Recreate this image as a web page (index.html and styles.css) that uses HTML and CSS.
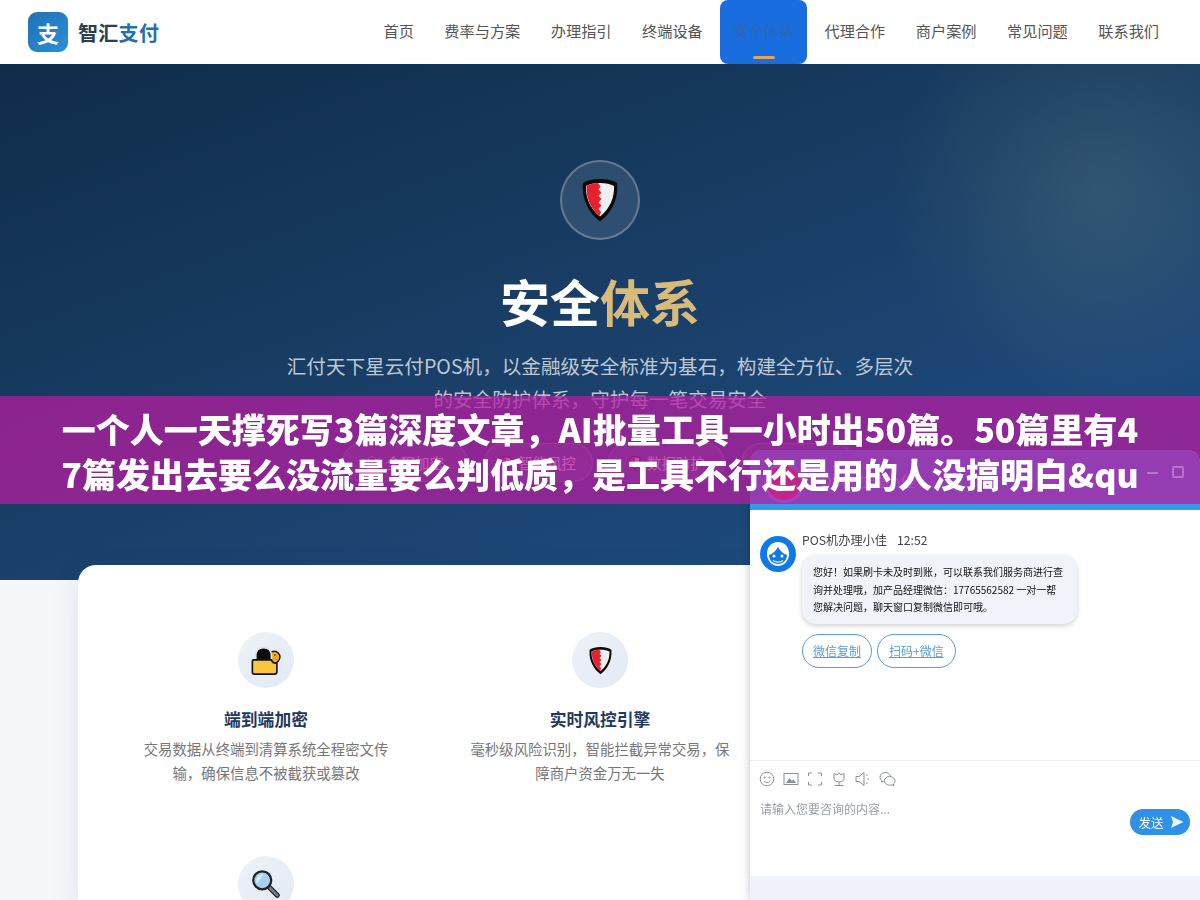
FILE: index.html
```html
<!DOCTYPE html>
<html lang="zh-CN">
<head>
  <meta charset="UTF-8">
  <meta name="viewport" content="width=device-width, initial-scale=1.0">
  <title>安全体系 - 智汇支付</title>
  <link rel="stylesheet" href="styles.css">
</head>
<body>
  <svg class="icon-defs" width="0" height="0" aria-hidden="true">
    <symbol id="shield" viewBox="0 0 36 44">
      <path d="M18 1C25 1 31 2.500 35 5C36.500 19 31 34 18 43.500C5 34 -.5 19 1 5C5 2.500 11 1 18 1Z" fill="#0a0a0a"/>
      <path d="M18 5C24 5 28.500 6 32 8C32.500 19 28.500 30 18 38.500C7.500 30 3.500 19 4 8C7.500 6 12 5 18 5Z" fill="#efefef"/>
      <path d="M16 5C12.500 5.200 8 6 4.500 8C4 19 8 30 17.500 38L19 34L16.500 31L19.500 27.500L16.500 24.500L19.500 21L16.500 18L19.500 14.500L16.500 11.500L18.500 8.500Z" fill="#e8212e"/>
    </symbol>
    <symbol id="lock" viewBox="0 0 44 42">
      <circle cx="34" cy="16" r="8.500" fill="#eda81f" stroke="#111" stroke-width="2"/>
      <circle cx="35" cy="13" r="1.300" fill="#6b4300"/>
      <path d="M7 24V14C7 6 12 2 18.500 2C25 2 30 6 30 14V24Z" fill="#0c0c0c" stroke="#e4e4e4" stroke-width="2.500"/>
      <path d="M4 20H30C31 24 34 25.500 38 25V37C38 39.500 37 41 34 41H5C3 41 2 40 2 38V22C2 21 3 20 4 20Z" fill="#fcc53f" stroke="#111" stroke-width="2.400"/>
    </symbol>
    <symbol id="magnifier" viewBox="0 0 40 40">
      <path d="M23 23L35 35" stroke="#222" stroke-width="7" stroke-linecap="round"/>
      <path d="M24 24L35 35" stroke="#6f7f88" stroke-width="3.500" stroke-linecap="round"/>
      <circle cx="15" cy="15" r="12" fill="#a9d0ef" stroke="#222" stroke-width="3"/>
      <path d="M7 17C7 11 11 7 17 7L8 19Z" fill="#d8ecfa"/>
    </symbol>
  </svg>

  <header class="site-header">
    <a class="logo" href="#">
      <span class="logo-mark">支</span>
      <span class="logo-text">智汇<em>支付</em></span>
    </a>
    <nav class="main-nav">
      <a href="#">首页</a>
      <a href="#">费率与方案</a>
      <a href="#">办理指引</a>
      <a href="#">终端设备</a>
      <a href="#" class="active">安全体系</a>
      <a href="#">代理合作</a>
      <a href="#">商户案例</a>
      <a href="#">常见问题</a>
      <a href="#">联系我们</a>
    </nav>
  </header>

  <section class="hero">
    <div class="hero-icon"><svg width="36" height="44"><use href="#shield"/></svg></div>
    <h1>安全<span>体系</span></h1>
    <p>汇付天下星云付POS机，以金融级安全标准为基石，构建全方位、多层次的安全防护体系，守护每一笔交易安全</p>
    <div class="hero-tags">
      <span class="tag tag-a"><svg width="14" height="14"><use href="#lock"/></svg>全程加密</span>
      <span class="tag tag-b"><svg width="12" height="14"><use href="#shield"/></svg>智能风控</span>
      <span class="tag tag-c"><svg width="12" height="14"><use href="#shield"/></svg>数据防护</span>
      <span class="tag tag-d"><svg width="14" height="14"><use href="#magnifier"/></svg>合规认证</span>
    </div>
  </section>

  <main class="features">
    <div class="feature">
      <div class="feature-icon"><svg width="30" height="29"><use href="#lock"/></svg></div>
      <h3>端到端加密</h3>
      <p>交易数据从终端到清算系统全程密文传输，确保信息不被截获或篡改</p>
    </div>
    <div class="feature">
      <div class="feature-icon"><svg width="23" height="29"><use href="#shield"/></svg></div>
      <h3>实时风控引擎</h3>
      <p>毫秒级风险识别，智能拦截异常交易，保障商户资金万无一失</p>
    </div>
    <div class="feature"></div>
    <div class="feature">
      <div class="feature-icon"><svg width="30" height="30"><use href="#magnifier"/></svg></div>
    </div>
  </main>

  <aside class="chat">
    <div class="chat-head">
      <span class="chat-head-avatar"></span>
      <span class="chat-head-title">POS机办理小佳</span>
    </div>
    <div class="chat-body">
      <svg class="avatar" width="36" height="36" viewBox="0 0 36 36">
        <circle cx="18" cy="18" r="18" fill="#0f7ae5"/>
        <path d="M18 6C11 6 7 11 7 18C7 25 12 30 18 30C24 30 29 25 29 18C29 11 25 6 18 6Z" fill="#fff"/>
        <path d="M9 19C12 18 16 15 18 11C20 15 24 18 27 19C27 24 23 28 18 28C13 28 9 24 9 19Z" fill="#0f7ae5"/>
        <circle cx="14" cy="20" r="1.500" fill="#fff"/>
        <circle cx="22" cy="20" r="1.500" fill="#fff"/>
        <path d="M13 24.500C16 26.500 20 26.500 23 24.500" stroke="#fff" stroke-width="1.200" fill="none"/>
      </svg>
      <div class="msg">
        <div class="msg-meta">POS机办理小佳<span>12:52</span></div>
        <div class="bubble">您好！如果刷卡未及时到账，可以联系我们服务商进行查询并处理哦，加产品经理微信：17765562582 一对一帮您解决问题，聊天窗口复制微信即可哦。</div>
        <div class="msg-actions">
          <a href="#">微信复制</a>
          <a href="#">扫码+微信</a>
        </div>
      </div>
    </div>
    <div class="chat-input">
      <div class="chat-tools">
        <svg width="16" height="16" viewBox="0 0 16 16"><circle cx="8" cy="8" r="6.800"/><circle cx="5.500" cy="6.500" r=".6"/><circle cx="10.500" cy="6.500" r=".6"/><path d="M4.800 10C6.500 12 9.500 12 11.200 10"/></svg>
        <svg width="16" height="16" viewBox="0 0 16 16"><rect x="1" y="2.500" width="14" height="11"/><path class="solid" d="M3 12L6.500 7L9 10L10.500 8.500L13 12Z"/></svg>
        <svg width="16" height="16" viewBox="0 0 16 16"><path d="M1.500 5V2H5M11 2H14.500V5M14.500 11V14H11M5 14H1.500V11"/></svg>
        <svg width="16" height="16" viewBox="0 0 16 16"><path d="M3 2.500L6 4L8 1.500L10 4L13 2.500V7C13 9.500 11 11 8 11C5 11 3 9.500 3 7ZM8 11V14M3.500 14.500H12.500"/></svg>
        <svg width="16" height="16" viewBox="0 0 16 16"><path d="M1 5.500H4L9 1.500V14.500L4 10.500H1ZM12 3.500V5M13 7.500V9M12 11.500V13"/></svg>
        <svg width="17" height="16" viewBox="0 0 17 16"><path d="M11.500 5.500C11 3 9 1.500 6.500 1.500C3.500 1.500 1 3.500 1 6C1 7.500 1.800 8.800 3 9.500L2.500 11.200L4.500 10.200"/><path d="M10.500 5.500C13.500 5.500 16 7.500 16 10C16 11.300 15.400 12.300 14.500 13L15 14.700L13 13.800C10 15 5.500 13.500 5.500 10C5.500 7.500 8 5.500 10.500 5.500Z"/></svg>
      </div>
      <div class="chat-input-row">
        <span class="placeholder">请输入您要咨询的内容...</span>
        <button type="button" class="send">发送
          <svg width="14" height="14" viewBox="0 0 14 14"><path d="M1 1L13.500 7L1 13L3 7Z" fill="#e8f3fd"/></svg>
        </button>
      </div>
    </div>
    <div class="chat-foot"></div>
  </aside>

  <div class="banner">
    <div class="banner-text">一个人一天撑死写3篇深度文章，AI批量工具一小时出50篇。50篇里有47篇发出去要么没流量要么判低质，是工具不行还是用的人没搞明白&amp;qu</div>
    <span class="win-min"></span>
    <span class="win-max"></span>
  </div>
</body>
</html>
```

FILE: styles.css
```css
* {
  box-sizing: border-box;
}
html, body {
  height: 900px;
  overflow: hidden;
}
body {
  margin: 0;
  font-family: "Noto Sans CJK SC", "Noto Sans", sans-serif;
  background-color: #f5f7fa;
  color: #333;
}
a {
  text-decoration: none;
  color: inherit;
}
.icon-defs {
  position: absolute;
}

/* header */
.site-header {
  height: 64px;
  padding: 0 28px;
  display: flex;
  align-items: center;
  justify-content: space-between;
  background: #fff;
}
.logo {
  display: flex;
  align-items: center;
  gap: 10px;
}
.logo-mark {
  width: 40px;
  height: 40px;
  border-radius: 9px;
  background: linear-gradient(135deg, #1f72b4, #2a90d8);
  color: #fff;
  font-size: 22px;
  font-weight: 700;
  line-height: 40px;
  text-align: center;
}
.logo-text {
  font-size: 20px;
  font-weight: 700;
  color: #2c3e50;
  letter-spacing: .3px;
}
.logo-text em {
  font-style: normal;
  color: #1f6fb2;
}
.main-nav {
  height: 64px;
  display: flex;
  gap: 4.5px;
}
.main-nav a {
  position: relative;
  padding: 0 13px;
  font-size: 15.2px;
  line-height: 60px;
  color: #555;
}
.main-nav a.active {
  background: #1a6ddf;
  color: #2a68b8;
  border-radius: 8px;
}
.main-nav a.active::after {
  content: "";
  position: absolute;
  left: 33px;
  bottom: 5px;
  width: 22px;
  height: 3px;
  border-radius: 2px;
  background: #dca566;
}

/* hero */
.hero {
  height: 516px;
  padding-top: 96px;
  text-align: center;
  color: #fff;
  background:
    radial-gradient(circle at 1100px 130px, rgba(125, 150, 130, .24), rgba(125, 150, 130, 0) 210px),
    linear-gradient(160deg, #0f2c49 0%, #1a3f68 50%, #1e5088 100%);
}
.hero-icon {
  width: 80px;
  height: 80px;
  margin: 0 auto;
  border-radius: 50%;
  background: rgba(255, 255, 255, .1);
  border: 2px solid rgba(255, 255, 255, .25);
  display: flex;
  align-items: center;
  justify-content: center;
}
.hero h1 {
  margin: 24px 0 0;
  font-size: 50px;
  line-height: 72px;
  font-weight: 700;
}
.hero h1 span {
  color: #d8bb7a;
}
.hero p {
  width: 640px;
  margin: 13px auto 0;
  font-size: 19.6px;
  line-height: 33px;
  color: rgba(255, 255, 255, .72);
}
.hero-tags {
  width: 512px;
  margin: 28px 0 0 342px;
  display: flex;
  justify-content: space-between;
}
.tag {
  height: 39px;
  display: flex;
  align-items: center;
  justify-content: center;
  gap: 6px;
  font-size: 14.4px;
  border: 1px solid rgba(255, 255, 255, .2);
  border-radius: 20px;
  background: rgba(255, 255, 255, .1);
  color: #fff;
}
.tag-a { width: 126px; }
.tag-b { width: 109px; }
.tag-c { width: 117px; }
.tag-d { width: 113px; }

/* feature card */
.features {
  width: 1044px;
  height: 335px;
  margin: -15px auto 0;
  padding: 35px 38px 0;
  position: relative;
  overflow: hidden;
  display: grid;
  grid-template-columns: repeat(3, 300px);
  grid-auto-rows: 224px;
  gap: 0 34px;
  background: #fff;
  border-radius: 18px 18px 0 0;
  box-shadow: 0 8px 30px rgba(20, 50, 90, .1);
}
.feature {
  padding: 32px 18px 0;
  text-align: center;
}
.feature-icon {
  width: 56px;
  height: 56px;
  margin: 0 auto;
  border-radius: 50%;
  background: linear-gradient(135deg, #eef2f8, #e2eaf5);
  display: flex;
  align-items: center;
  justify-content: center;
}
.feature h3 {
  margin: 19px 0 0;
  font-size: 16.8px;
  line-height: 24px;
  font-weight: 700;
  color: #1e3a5f;
}
.feature p {
  margin: 6px 0 0;
  font-size: 14.4px;
  line-height: 24px;
  color: #777;
}

/* chat window */
.chat {
  position: fixed;
  left: 750px;
  top: 450px;
  width: 450px;
  height: 450px;
  display: flex;
  flex-direction: column;
  background: #fff;
  border-radius: 12px 12px 0 0;
  box-shadow: 0 0 10px rgba(0, 0, 0, .25);
}
.chat-head {
  height: 60px;
  flex: none;
  padding: 16px 17px 0;
  display: flex;
  gap: 10px;
  background: #3a96e8;
  border-radius: 12px 12px 0 0;
  font-size: 15px;
  color: #fff;
}
.chat-head-avatar {
  width: 34px;
  height: 34px;
  border-radius: 50%;
  background: #e23a63;
  box-shadow: 0 0 0 3px rgba(255, 255, 255, .3);
}
.chat-head-title {
  line-height: 30px;
  opacity: .6;
}
.chat-body {
  height: 250px;
  flex: none;
  padding: 26px 10px 0;
  display: flex;
  gap: 6px;
}
.avatar {
  flex: none;
}
.msg-meta {
  font-size: 12.2px;
  line-height: 16px;
  margin-top: -4px;
  color: #444;
}
.msg-meta span {
  margin-left: 10px;
}
.bubble {
  width: 275px;
  margin-top: 7px;
  padding: 8px 11px;
  border-radius: 14px;
  background: #f1f3fa;
  box-shadow: 0 2px 5px rgba(0, 0, 0, .18);
  font-size: 10px;
  line-height: 17.500px;
  color: #111;
}
.msg-actions {
  margin-top: 10px;
  display: flex;
  gap: 5px;
}
.msg-actions a {
  height: 34px;
  padding: 0 10px;
  border: 1px solid #5b9ccb;
  border-radius: 17px;
  font-size: 12px;
  line-height: 32px;
  color: #5a9bd8;
  text-decoration: underline;
}
.msg-actions a:last-child {
  padding: 0 11px;
}
.chat-input {
  flex: 1;
  padding: 10px 9px 0;
  border-top: 1px solid #eceef2;
}
.chat-tools {
  display: flex;
  gap: 8px;
}
.chat-tools svg {
  fill: none;
  stroke: #8a8f99;
  stroke-width: 1;
}
.chat-tools .solid {
  fill: #8a8f99;
  stroke: none;
}
.chat-input-row {
  display: flex;
  justify-content: space-between;
  align-items: flex-start;
  padding: 0 1px;
}
.placeholder {
  margin-top: 13px;
  font-size: 12px;
  line-height: 18px;
  color: #9aa0a8;
}
.send {
  width: 60px;
  height: 26px;
  margin-top: 22px;
  padding: 0 0 0 2px;
  display: flex;
  align-items: center;
  justify-content: center;
  gap: 6px;
  border: none;
  border-radius: 13px;
  background: #2f90e8;
  color: #fff;
  font-family: inherit;
  font-size: 12.5px;
}
.chat-foot {
  height: 24px;
  flex: none;
  background: #f0f2fa;
}

/* purple banner */
.banner {
  position: fixed;
  left: 0;
  top: 396px;
  width: 1200px;
  height: 108px;
  padding: 10px 60px 0;
  background: rgba(180, 30, 160, .75);
}
.banner-text {
  height: 90px;
  overflow: hidden;
  font-size: 34px;
  line-height: 45px;
  font-weight: 900;
  color: #fff;
  text-align: center;
  word-break: break-all;
}
.win-min {
  position: absolute;
  left: 1147px;
  top: 76px;
  width: 11px;
  height: 2px;
  background: rgba(255, 255, 255, .3);
}
.win-max {
  position: absolute;
  left: 1172px;
  top: 70px;
  width: 12px;
  height: 12px;
  border: 2px solid rgba(255, 255, 255, .3);
  border-radius: 2px;
}
```
